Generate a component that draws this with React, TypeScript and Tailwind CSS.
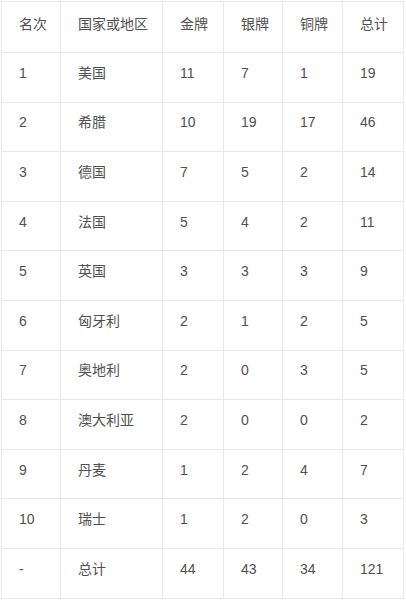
import React from "react";

const header = ["名次", "国家或地区", "金牌", "银牌", "铜牌", "总计"];
const rows: string[][] = [
  ["1", "美国", "11", "7", "1", "19"],
  ["2", "希腊", "10", "19", "17", "46"],
  ["3", "德国", "7", "5", "2", "14"],
  ["4", "法国", "5", "4", "2", "11"],
  ["5", "英国", "3", "3", "3", "9"],
  ["6", "匈牙利", "2", "1", "2", "5"],
  ["7", "奥地利", "2", "0", "3", "5"],
  ["8", "澳大利亚", "2", "0", "0", "2"],
  ["9", "丹麦", "1", "2", "4", "7"],
  ["10", "瑞士", "1", "2", "0", "3"],
  ["-", "总计", "44", "43", "34", "121"],
];

const widths = ["w-[59px]", "w-[102px]", "w-[61px]", "w-[59px]", "w-[60px]", "w-[61px]"];

export default function App() {
  return (
    <div
      className="w-[406px] h-[600px] bg-white pt-[1px] pl-[1px]"
      style={{ fontFamily: '"Liberation Sans", "Noto Sans CJK SC", sans-serif' }}
    >
      <table className="border-collapse text-[14px] text-[#505050]">
        <thead>
          <tr className="h-[51px]">
            {header.map((h, i) => (
              <th
                key={i}
                className={`${widths[i]} border border-[#e8e8e8] text-left font-normal p-0 pl-[17px] pb-[6px]`}
              >
                {h}
              </th>
            ))}
          </tr>
        </thead>
        <tbody>
          {rows.map((r, ri) => (
            <tr key={ri} className="h-[49.6px]">
              {r.map((c, ci) => (
                <td
                  key={ci}
                  className={`${widths[ci]} border border-[#e8e8e8] text-left p-0 pl-[17px] pb-[8px]`}
                >
                  {c}
                </td>
              ))}
            </tr>
          ))}
        </tbody>
      </table>
    </div>
  );
}
